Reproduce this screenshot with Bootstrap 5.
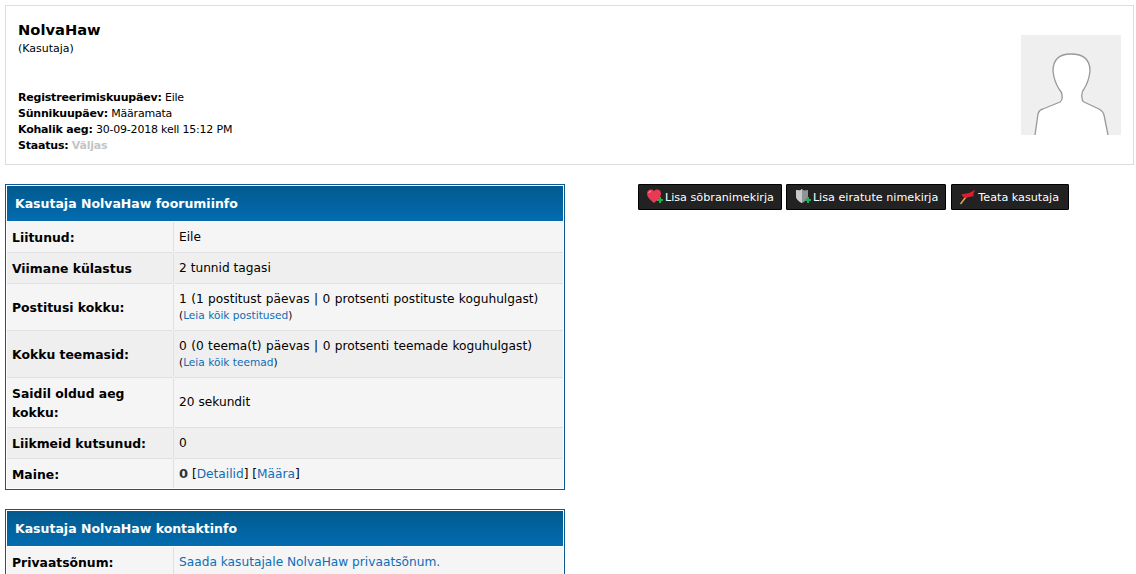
<!DOCTYPE html>
<html lang="en">
<head>
  <meta charset="UTF-8">
  <title>NolvaHaw</title>
  <link rel="stylesheet" href="https://cdn.jsdelivr.net/npm/bootstrap@5.3.0/dist/css/bootstrap.min.css">
  <style>
    body {
      font-family: "DejaVu Sans", Verdana, sans-serif;
      font-size: 12px;
      color: #000;
      padding: 5px 2px 5px 5px;
      background: #fff;
    }
    a { color: #0f6db5; text-decoration: none; }
    .profile-box {
      height: 160px;
      border: 1px solid #ddd;
      padding: 14px 12px 0 12px;
    }
    .profile-name { font-size: 14.7px; font-weight: 700; line-height: 20px; }
    .profile-rank { font-size: 11px; line-height: 16px; height: 49px; margin-top: 1px; }
    .profile-line { font-size: 11px; line-height: 16px; letter-spacing: -.2px; }
    .status-off { color: #c4c4c4; font-weight: 700; }
    .avatar-pic { width: 100px; height: 100px; display: block; margin-top: 15px; }
    .info-wrap { margin-top: 19px; }
    .info-col { width: 560px; flex: none; }
    .info-table {
      width: 560px;
      border: 1px solid #0b5a8f;
      border-spacing: 1px;
      border-collapse: separate;
      margin-bottom: 19px;
      table-layout: fixed;
    }
    .label-col { width: 166px; }
    .info-table th.head-cell {
      height: 35px;
      padding: 1px 8px 0 8px;
      color: #fff;
      font-size: 12.5px;
      background: linear-gradient(#025a8e, #026cb1);
    }
    .info-table td {
      background: #f5f5f5;
      padding: 0 5px;
      height: 30px;
      font-size: 12.2px;
      line-height: 17px;
      box-shadow: 0 1px 0 #e0e0e0;
    }
    .info-table td.label-cell { box-shadow: 0 1px 0 #e0e0e0, 1px 0 0 #e0e0e0; }
    .info-table tr:last-child td { box-shadow: none; }
    .info-table tr:last-child td.label-cell { box-shadow: 1px 0 0 #e0e0e0; }
    .info-table tr.row-short td { height: 29px; padding-top: 1px; }
    .info-table tr.row-alt td { background: #efefef; }
    .info-table td.label-cell { font-weight: 700; font-size: 12.4px; line-height: 19px; }
    .info-table td.tall-cell { height: 46px; }
    .info-table td.taller-cell { height: 49px; }
    .stat-line { word-spacing: .55px; }
    .rep-num { font-size: 13px; color: #333; }
    .small-note { font-size: 10.6px; line-height: 15px; display: block; word-spacing: 0; }
    .btn-col { margin-left: 8px; }
    .dark-btn {
      background: #222;
      border: 1px solid #000;
      color: #fff;
      height: 26px;
      font-size: 11.2px;
      padding: 1px 7px 0 7px;
      line-height: 24px;
      border-radius: 1px;
      white-space: nowrap;
    }
    .dark-btn:hover { background: #333; color: #fff; }
    .dark-btn svg { width: 17px; height: 17px; vertical-align: -4px; margin-right: 2px; }
    .btn-gap { gap: 4px; }
    .btn-last { padding-right: 9px; margin-left: 1px; }
  </style>
</head>
<body>

  <div class="profile-box d-flex justify-content-between">
    <div>
      <div class="profile-name">NolvaHaw</div>
      <div class="profile-rank">(Kasutaja)</div>
      <div class="profile-line"><b>Registreerimiskuupäev:</b> Eile</div>
      <div class="profile-line"><b>Sünnikuupäev:</b> Määramata</div>
      <div class="profile-line"><b>Kohalik aeg:</b> 30-09-2018 kell 15:12 PM</div>
      <div class="profile-line"><b>Staatus:</b> <span class="status-off">Väljas</span></div>
    </div>
    <svg class="avatar-pic" viewBox="0 0 100 100">
      <rect width="100" height="100" fill="#efefef"/>
      <path d="M14 100 L17 79 Q18 75 22 74 L39 67 Q42 65 41 60 Q41 57 38 54 Q33 46 32 36 Q32 19 50 19 Q69 19 69 36 Q68 46 63 54 Q60 57 61 63 Q61 66 63 67 L78 74 Q82 76 83 80 L87 100" fill="#fff" stroke="#999" stroke-width="1.3"/>
    </svg>
  </div>

  <div class="info-wrap d-flex align-items-start">
    <div class="info-col">
      <table class="info-table">
        <colgroup><col class="label-col"><col></colgroup>
        <tr><th class="head-cell" colspan="2">Kasutaja NolvaHaw foorumiinfo</th></tr>
        <tr><td class="label-cell">Liitunud:</td><td>Eile</td></tr>
        <tr class="row-alt"><td class="label-cell">Viimane külastus</td><td>2 tunnid tagasi</td></tr>
        <tr>
          <td class="label-cell tall-cell">Postitusi kokku:</td>
          <td class="stat-line">1 (1 postitust päevas | 0 protsenti postituste koguhulgast)<span class="small-note">(<a href="#">Leia kõik postitused</a>)</span></td>
        </tr>
        <tr class="row-alt">
          <td class="label-cell tall-cell">Kokku teemasid:</td>
          <td class="stat-line">0 (0 teema(t) päevas | 0 protsenti teemade koguhulgast)<span class="small-note">(<a href="#">Leia kõik teemad</a>)</span></td>
        </tr>
        <tr><td class="label-cell taller-cell">Saidil oldud aeg kokku:</td><td>20 sekundit</td></tr>
        <tr class="row-alt"><td class="label-cell">Liikmeid kutsunud:</td><td>0</td></tr>
        <tr class="row-short"><td class="label-cell">Maine:</td><td><b class="rep-num">0</b> [<a href="#">Detailid</a>] [<a href="#">Määra</a>]</td></tr>
      </table>

      <table class="info-table">
        <colgroup><col class="label-col"><col></colgroup>
        <tr><th class="head-cell" colspan="2">Kasutaja NolvaHaw kontaktinfo</th></tr>
        <tr><td class="label-cell">Privaatsõnum:</td><td><a href="#">Saada kasutajale NolvaHaw privaatsõnum.</a></td></tr>
      </table>
    </div>

    <div class="btn-col flex-grow-1 d-flex justify-content-center btn-gap">
      <a href="#" class="btn dark-btn">
        <svg viewBox="0 0 17 17"><path d="M8 15 C3 11 1 8.5 1 5.5 C1 3 3 1.5 5 1.5 C6.3 1.5 7.4 2.2 8 3.2 C8.6 2.2 9.7 1.5 11 1.5 C13.2 1.5 15 3 15 5.5 C15 8.5 13 11 8 15 Z" fill="#e83a55"/><path d="M3 5 C3 4 4 3.2 5 3.2" stroke="#ffb6c1" fill="none"/><path d="M11 11 h2 v-2 h2 v2 h2 v2 h-2 v2 h-2 v-2 h-2 z" fill="#22b14c"/></svg>Lisa sõbranimekirja
      </a>
      <a href="#" class="btn dark-btn">
        <svg viewBox="0 0 17 17"><path d="M8 1 L10 2.5 L14 2 L14 8 C14 11 11 13.5 8 15 C5 13.5 2 11 2 8 L2 2 L6 2.5 Z" fill="#8f9494"/><path d="M8 1 L6 2.5 L2 2 L2 8 C2 11 5 13.5 8 15 Z" fill="#c6caca"/><path d="M11 11 h2 v-2 h2 v2 h2 v2 h-2 v2 h-2 v-2 h-2 z" fill="#22b14c"/></svg>Lisa eiratute nimekirja
      </a>
      <a href="#" class="btn dark-btn btn-last">
        <svg viewBox="0 0 17 17"><path d="M1.5 16 L8 7.5" stroke="#e8a04a" stroke-width="1.5"/><path d="M2 6.5 L10 5 L16 2 L14 7 L15 8 L8 9.5 L5.5 10 Z" fill="#e01f2d"/></svg>Teata kasutaja
      </a>
    </div>
  </div>

</body>
</html>
